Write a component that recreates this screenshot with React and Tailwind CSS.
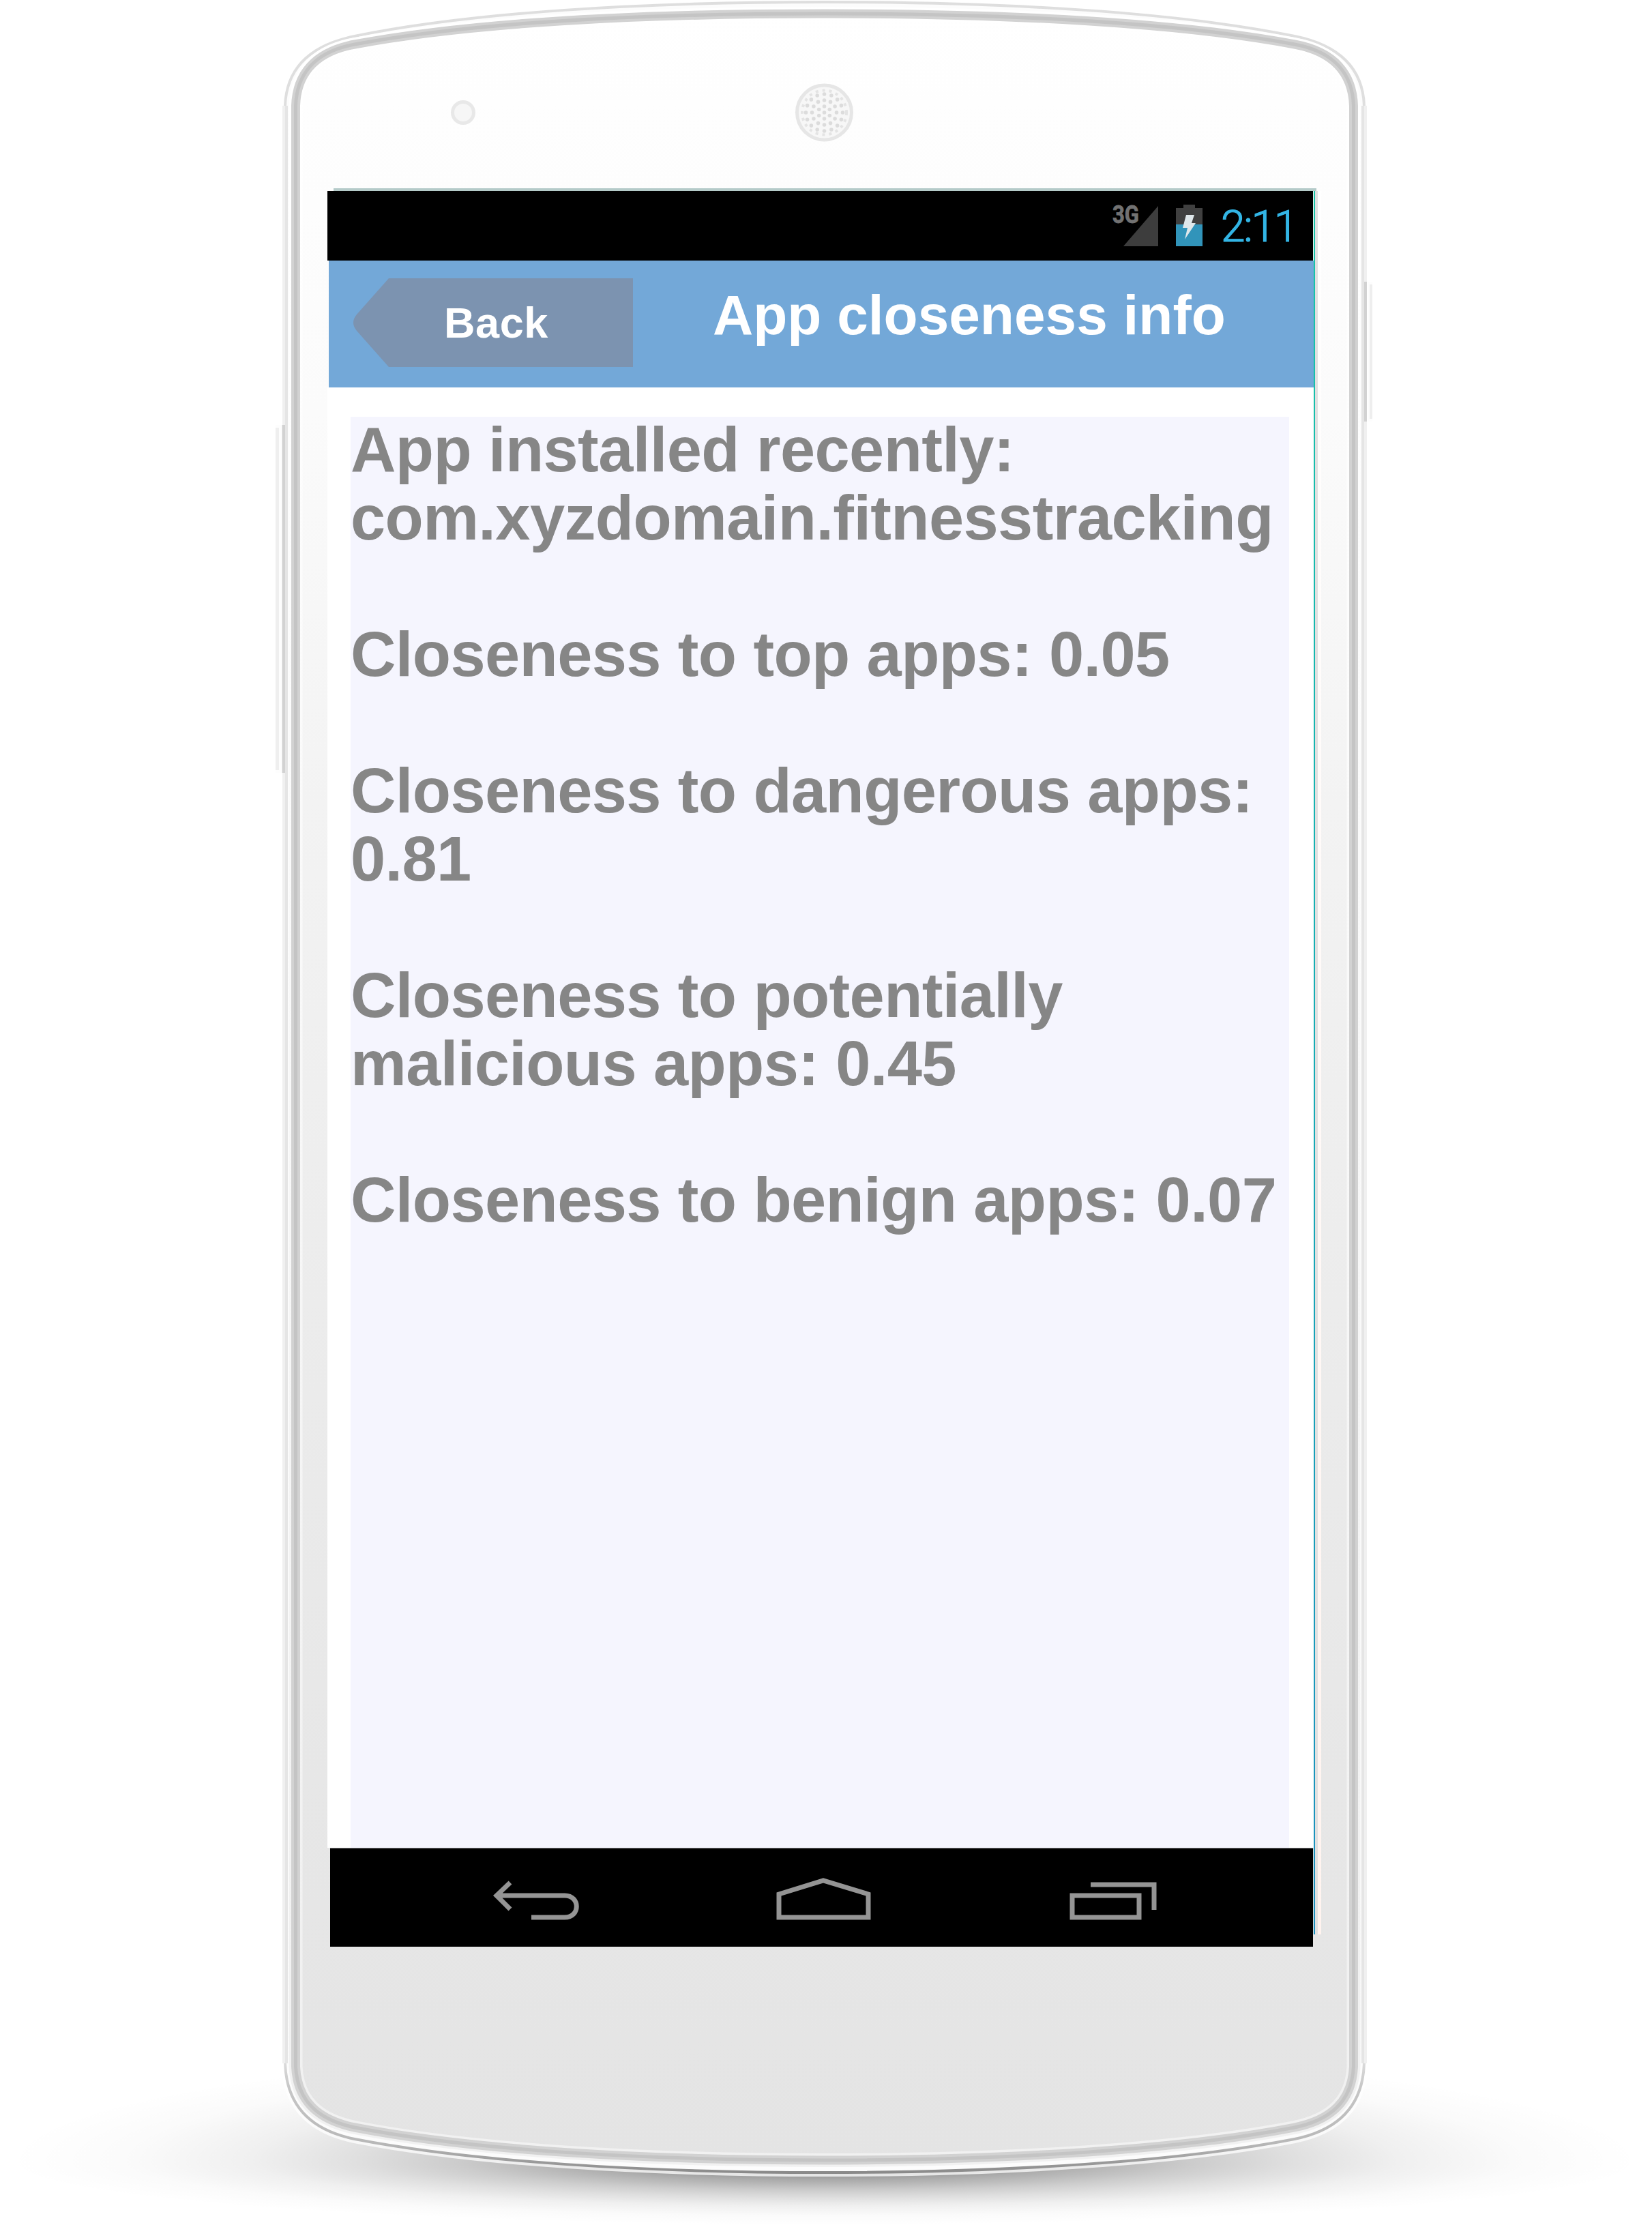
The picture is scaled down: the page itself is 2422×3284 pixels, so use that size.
const INFO_LINES = [
  'App installed recently:',
  'com.xyzdomain.fitnesstracking',
  '',
  'Closeness to top apps: 0.05',
  '',
  'Closeness to dangerous apps:',
  '0.81',
  '',
  'Closeness to potentially',
  'malicious apps: 0.45',
  '',
  'Closeness to benign apps: 0.07',
];

const SPEAKER_HOLES = [
  [0, 1], [9, 6], [18, 12], [27, 16],
].flatMap(([radius, count]) =>
  Array.from({ length: count }, (_, i) => {
    const angle = (i / count) * Math.PI * 2 + Math.PI / 2;
    return [1208.5 + radius * Math.cos(angle), 165 + radius * Math.sin(angle)];
  })
);

const OUTER =
  'M418 155 C420 98 456 66 520 53 C690 18 940 3 1209 3 C1478 3 1728 18 1898 53 C1962 66 1998 98 2000 155 V3025 C1998 3088 1962 3123 1898 3136 C1728 3169 1478 3185 1209 3185 C940 3185 690 3169 520 3136 C456 3123 420 3088 418 3025 Z';
const INNER =
  'M433.5 155 C435 110 460 76 520 65 C690 33 940 20 1209 20 C1478 20 1728 33 1898 65 C1958 76 1983 110 1984.5 155 V3030 C1982 3080 1952 3108 1898 3119 C1728 3152 1478 3167 1209 3167 C940 3167 690 3152 520 3119 C466 3108 436 3080 433.5 3030 Z';

function PhoneShell() {
  return (
    <svg className="absolute inset-0" width="2422" height="3284" viewBox="0 0 2422 3284" fill="none">
      <defs>
        <linearGradient id="face" gradientUnits="userSpaceOnUse" x1="0" y1="0" x2="0" y2="3180">
          <stop offset="0" stopColor="#ffffff" />
          <stop offset="0.19" stopColor="#fbfbfb" />
          <stop offset="0.37" stopColor="#f3f3f3" />
          <stop offset="0.6" stopColor="#ececec" />
          <stop offset="0.82" stopColor="#e7e7e7" />
          <stop offset="1" stopColor="#e4e4e4" />
        </linearGradient>
        <linearGradient id="rim" gradientUnits="userSpaceOnUse" x1="0" y1="0" x2="0" y2="3190">
          <stop offset="0" stopColor="#dedede" />
          <stop offset="0.94" stopColor="#e8e8e8" />
          <stop offset="0.96" stopColor="#c6c6c6" />
          <stop offset="0.985" stopColor="#b8b8b8" />
          <stop offset="1" stopColor="#858585" />
        </linearGradient>
        <linearGradient id="highlight" gradientUnits="userSpaceOnUse" x1="0" y1="0" x2="0" y2="3190">
          <stop offset="0.1" stopColor="#ffffff" />
          <stop offset="0.9" stopColor="#f1f1f1" />
        </linearGradient>
        <radialGradient id="shadow">
          <stop offset="0" stopColor="#000" stopOpacity="0.56" />
          <stop offset="0.18" stopColor="#000" stopOpacity="0.43" />
          <stop offset="0.3" stopColor="#000" stopOpacity="0.32" />
          <stop offset="0.45" stopColor="#000" stopOpacity="0.2" />
          <stop offset="0.57" stopColor="#000" stopOpacity="0.125" />
          <stop offset="0.7" stopColor="#000" stopOpacity="0.06" />
          <stop offset="0.85" stopColor="#000" stopOpacity="0.018" />
          <stop offset="1" stopColor="#000" stopOpacity="0" />
        </radialGradient>
        <clipPath id="above"><rect x="0" y="2900" width="2422" height="270" /></clipPath>
        <clipPath id="below"><rect x="0" y="3170" width="2422" height="114" /></clipPath>
      </defs>
      <ellipse cx="1209" cy="3170" rx="1200" ry="170" fill="url(#shadow)" clipPath="url(#above)" />
      <ellipse cx="1209" cy="3170" rx="1200" ry="92" fill="url(#shadow)" clipPath="url(#below)" />

      <rect x="404" y="623" width="14" height="510" fill="#fdfdfd" />
      <rect x="404" y="627" width="5" height="502" fill="#efefef" />
      <rect x="2000" y="413" width="12" height="205" fill="#fdfdfd" />
      <rect x="2008" y="417" width="4" height="197" fill="#eeeeee" />

      <path d={OUTER} stroke="#fff" strokeWidth="12" strokeOpacity="0.75" />
      <path d={OUTER} fill="#fcfcfc" stroke="url(#rim)" strokeWidth="4" />
      <path d="M416 155 V3025 M2002 155 V3025" stroke="#f0f0f0" strokeWidth="4" />
      <path d="M420 155 V3025 M1998 155 V3025" stroke="#e5e5e5" strokeWidth="4" />
      <path d={INNER} fill="url(#face)" />
      <path d={INNER} stroke="url(#highlight)" strokeWidth="20" />
      <path d={INNER} stroke="#d2d2d2" strokeWidth="13" />
      <path d={INNER} stroke="#c4c4c4" strokeWidth="5" />
      <rect x="413.5" y="623" width="4.5" height="510" fill="#d2d2d2" />
      <rect x="2000" y="413" width="4" height="205" fill="#d2d2d2" />

      <circle cx="679" cy="165" r="15.5" fill="#f6f6f6" stroke="#e8e8e8" strokeWidth="5" />
      <circle cx="1208.5" cy="165" r="40" fill="#f7f7f7" stroke="#e6e6e6" strokeWidth="5" />
      {SPEAKER_HOLES.map(([x, y], i) => (
        <circle key={i} cx={x} cy={y} r="2.8" fill="#dcdcdc" />
      ))}
      <circle cx="1208.5" cy="165" r="32.5" stroke="#e4e4e4" strokeWidth="4" strokeDasharray="4 6" />
    </svg>
  );
}

function StatusBar() {
  return (
    <div className="flex h-[102px] w-[1445px] items-start bg-black">
      <div className="mt-[17px] ml-[1151px] w-[40px] shrink-0">
        <span className="block origin-left scale-x-[0.84] font-[Roboto,sans-serif] text-[37px] leading-[36px] font-bold text-[#727272] [-webkit-text-stroke:0.8px_#727272]">3G</span>
      </div>
      <svg className="mt-[22px] -ml-[24px] shrink-0" width="51" height="60" viewBox="0 0 51 60">
        <path d="M0 59 L51 0 V59 Z" fill="#3d3d3d" />
      </svg>
      <svg className="mt-[20px] ml-[26px] shrink-0" width="39" height="62" viewBox="0 0 39 62">
        <path d="M11 0 H28 V5 H39 V61 H0 V5 H11 Z" fill="#404040" />
        <path d="M0 29 H39 V61 H0 Z" fill="#3194ba" />
        <path d="M15 15 H27 L23 27 H29 L13 51 L17 34 H10 Z" fill="#dfe7ea" />
      </svg>
      <span className="mt-[21px] ml-[27px] font-[Roboto,sans-serif] text-[64px] leading-[64px] font-light tracking-[-2.2px] text-[#33b5e5] [-webkit-text-stroke:1.2px_#33b5e5]">2:11</span>
    </div>
  );
}

function Header() {
  return (
    <div className="ml-[2px] flex h-[186px] w-[1444px] items-start bg-[#73a8d8]">
      <button className="relative mt-[26px] ml-[36px] h-[130px] w-[410px] text-left">
        <svg className="absolute inset-0" width="410" height="130" viewBox="0 0 410 130">
          <path d="M52 0 H410 V130 H52 L5 77 Q-5 65 5 53 Z" fill="#7c93b0" />
        </svg>
        <span className="relative ml-[133px] block text-[63px] leading-[130px] font-bold tracking-[0.6px] text-white">Back</span>
      </button>
      <h1 className="mt-[35px] ml-[117px] text-[82px] leading-[90px] font-bold whitespace-nowrap text-white">App closeness info</h1>
    </div>
  );
}

function InfoPanel() {
  return (
    <div className="flex h-[2141px] w-[1446px] bg-white pt-[43px] pl-[34px]">
      <div className="h-full w-[1376px] bg-[#f5f5fe] text-[92px] leading-[100px] font-bold tracking-[-0.6px] whitespace-nowrap text-[#868686]">
        <div className="-mt-[2px]">
          {INFO_LINES.map((line, i) => (
            <p key={i} className="h-[100px]">{line}</p>
          ))}
        </div>
      </div>
    </div>
  );
}

function NavBar() {
  return (
    <div className="ml-[4px] flex h-[145px] w-[1441px] items-start border-t border-[#77777d] bg-black">
      <svg className="mt-[40px] ml-[236px]" width="130" height="70" viewBox="0 0 130 70" fill="none" stroke="#949494" strokeWidth="7">
        <path d="M28 10 L8 29 L28 49 M8 29 H108 C131 29 131 61 108 61 H59" />
      </svg>
      <svg className="mt-[40px] ml-[288px]" width="140" height="70" viewBox="0 0 140 70" fill="none" stroke="#949494" strokeWidth="7">
        <path d="M4 61 V27 L69 7 L135 27 V61 Z" />
      </svg>
      <svg className="mt-[40px] ml-[289px]" width="130" height="70" viewBox="0 0 130 70" fill="none" stroke="#949494" strokeWidth="7">
        <path d="M5 29 H103 V61 H5 Z M32 13 H125 V50" />
      </svg>
    </div>
  );
}

export default function App() {
  return (
    <main className="relative h-[3284px] w-[2422px] overflow-hidden bg-white font-['Liberation_Sans',Arial,sans-serif]">
      <PhoneShell />
      <div className="relative flex pt-[276px] pl-[480px]">
        <div className="w-[1446px]">
          <div className="ml-[9px] h-[4px] w-[1441px] bg-[#b5cbc9]" />
          <StatusBar />
          <Header />
          <InfoPanel />
          <NavBar />
        </div>
        <div className="flex h-[2560px] pt-[4px]">
          <div className="h-full w-[2px] bg-linear-to-b from-[#18c5a7] to-[#1b8fbd]" />
          <div className="h-full w-[4px] bg-[#e0e0e0]" />
          <div className="h-full w-[5px] bg-linear-to-b from-white to-[#fff3ef]" />
        </div>
      </div>
    </main>
  );
}
